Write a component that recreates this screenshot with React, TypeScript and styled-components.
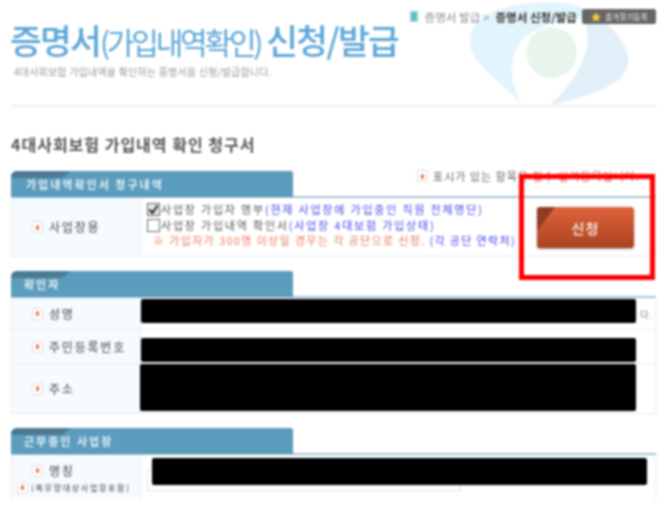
import styled, { createGlobalStyle } from 'styled-components';

const GlobalStyle = createGlobalStyle`
  html, body {
    margin: 0;
    padding: 0;
    background: #fff;
    overflow: hidden;
  }
  * {
    box-sizing: border-box;
  }
`;

const Page = styled.div`
  position: relative;
  width: 668px;
  height: 506px;
  overflow: hidden;
  padding: 0 12px 0 11px;
  background: #fff;
  font-family: "Noto Sans CJK KR", "Liberation Sans", sans-serif;
  color: #555;
  filter: blur(1px);
`;

const Header = styled.header`
  position: relative;
  height: 107px;
  border-bottom: 2px solid #eeeeee;
`;

const Watermark = styled.svg`
  position: absolute;
  left: 449px;
  top: 0;
  width: 200px;
  height: 105px;
`;

const TopBar = styled.div`
  position: relative;
  display: flex;
  justify-content: flex-end;
  align-items: center;
  height: 15px;
  top: 9px;
  font-size: 11.5px;
  letter-spacing: 0.05px;
`;

const CrumbIcon = styled.span`
  width: 8px;
  height: 11px;
  margin-right: 7px;
  border-radius: 1px;
  background: #5cb8bb;
  border: 2px solid #8fd0d2;
`;

const Crumb = styled.span<{ $current?: boolean }>`
  color: ${(p) => (p.$current ? '#333' : '#8a8a8a')};
  font-weight: ${(p) => (p.$current ? 700 : 400)};
  margin-right: ${(p) => (p.$current ? '5px' : '6px')};
  white-space: nowrap;
`;

const BookmarkButton = styled.button`
  display: flex;
  align-items: center;
  justify-content: center;
  gap: 3px;
  width: 74px;
  height: 15px;
  padding: 0;
  border: 0;
  border-radius: 2px;
  background: #666;
  color: #eee;
  font-family: inherit;
  font-size: 7.5px;
  letter-spacing: 0.2px;
`;

const Title = styled.h1`
  position: relative;
  margin: 2px 0 0 -1px;
  font-size: 34.5px;
  line-height: 44px;
  font-weight: 500;
  letter-spacing: -1.75px;
  color: #5ba6d8;
  white-space: nowrap;
`;

const TitleLight = styled.span`
  font-size: 30px;
  font-weight: 400;
  letter-spacing: -3.2px;
`;

const Lead = styled.p`
  position: relative;
  margin: 2px 0 0 3px;
  font-size: 10px;
  line-height: 13px;
  letter-spacing: 0.2px;
  color: #999;
  white-space: nowrap;
`;

const Heading = styled.h2`
  margin: 26px 0 0;
  height: 23px;
  font-size: 16px;
  line-height: 23px;
  font-weight: 700;
  letter-spacing: 1px;
  color: #555;
  white-space: nowrap;
`;

const Section = styled.section<{ $gap: number }>`
  margin-top: ${(p) => p.$gap}px;
`;

const TabRow = styled.div`
  position: relative;
  display: flex;
  justify-content: space-between;
  height: 27px;
  border-bottom: 2px solid #a6c3d9;
`;

const Tab = styled.div<{ $inset: number }>`
  position: relative;
  display: flex;
  align-items: center;
  width: 282px;
  height: 26px;
  padding-left: ${(p) => p.$inset}px;
  border-radius: 6px 2px 0 0;
  overflow: hidden;
  background: #5c9cbd;
  color: #e6f2f7;
  font-size: 11px;
  font-weight: 700;
  letter-spacing: 2px;
  white-space: nowrap;

  &::before {
    content: '';
    position: absolute;
    left: 0;
    top: 0;
    width: 60px;
    height: 7px;
    background: #4d7a92;
    clip-path: polygon(0 0, 100% 0, 85% 100%, 0 100%);
  }

  span {
    position: relative;
  }
`;

const Note = styled.div`
  display: flex;
  align-items: center;
  gap: 5px;
  height: 14px;
  margin: -2px 16px 0 0;
  font-size: 11px;
  letter-spacing: 1px;
  color: #666;
  white-space: nowrap;

  b {
    font-weight: 400;
    color: #e0604a;
  }
`;

const Table = styled.div<{ $open?: boolean }>`
  border: 1px solid #e8ecf0;
  border-top: 0;
  border-bottom-width: ${(p) => (p.$open ? 0 : 1)}px;
`;

const Row = styled.div<{ $height: number }>`
  display: grid;
  grid-template-columns: 129px 1fr;
  height: ${(p) => p.$height}px;
  border-bottom: 1px solid #e8ecf0;

  &:last-child {
    border-bottom: 0;
  }
`;

const Label = styled.div`
  display: flex;
  flex-direction: column;
  justify-content: center;
  background: #f6fbff;
  border-right: 1px solid #e8ecf0;
  color: #666;
  font-weight: 500;
`;

const LabelLine = styled.div<{ $indent?: number; $small?: boolean }>`
  display: flex;
  align-items: center;
  gap: ${(p) => (p.$small ? 3 : 6)}px;
  padding-left: ${(p) => p.$indent ?? 20}px;
  font-size: ${(p) => (p.$small ? 8 : 12)}px;
  line-height: ${(p) => (p.$small ? 14 : 20)}px;
  letter-spacing: ${(p) => (p.$small ? 1.7 : 1.8)}px;
  white-space: nowrap;
`;

const Bullet = styled.span`
  display: inline-flex;
  align-items: center;
  justify-content: center;
  flex: none;
  width: 11px;
  height: 12px;
  border: 1px solid #ddd;
  border-radius: 2px;
  background: #fff;

  &::after {
    content: '';
    width: 3px;
    height: 5px;
    border-radius: 2px;
    background: #e8733c;
  }
`;

const Cell = styled.div`
  position: relative;
  display: flex;
  align-items: flex-start;
  background: #fff;
`;

const OptionList = styled.div`
  display: flex;
  flex-direction: column;
  padding: 4px 0 0 6px;
  font-size: 11px;
  line-height: 15.5px;
  letter-spacing: 1.8px;
  color: #555;
  white-space: nowrap;
`;

const Option = styled.label`
  display: flex;
  align-items: center;
`;

const Box = styled.span<{ $checked?: boolean }>`
  display: inline-flex;
  align-items: center;
  justify-content: center;
  width: 13px;
  height: 13px;
  margin-right: 1px;
  border: 1px solid #666;
  background: ${(p) => (p.$checked ? '#e8e8e8' : '#fff')};
`;

const Blue = styled.span`
  color: #4747ee;
`;

const Warning = styled.div`
  padding-left: 6px;
  color: #ea7a58;
  letter-spacing: 1.36px;
`;

const SubmitButton = styled.button`
  position: absolute;
  left: 396px;
  top: 9px;
  width: 97px;
  height: 41px;
  padding: 0;
  border: 0;
  border-radius: 3px;
  overflow: hidden;
  background: linear-gradient(#df643c, #ab4222);
  box-shadow: 0 1px 2px #999;
  color: #f4dcd0;
  font-family: inherit;
  font-size: 14px;
  font-weight: 700;
  letter-spacing: 1px;

  &::before {
    content: '';
    position: absolute;
    left: 0;
    top: 0;
    width: 18px;
    height: 24px;
    background: #8e3c22;
    clip-path: polygon(0 0, 100% 0, 0 100%);
  }
`;

const Redaction = styled.div<{ $left: number; $top: number; $width: number; $height: number }>`
  position: absolute;
  left: ${(p) => p.$left}px;
  top: ${(p) => p.$top}px;
  width: ${(p) => p.$width}px;
  height: ${(p) => p.$height}px;
  border-radius: 2px;
  background: #000;
`;

const InputBox = styled.div`
  width: 314px;
  height: 22px;
  margin: 14px 0 0 6px;
  border: 1px solid #e4e4e4;
  background: #fff;
`;

const Callout = styled.div`
  position: absolute;
  left: 519px;
  top: 174px;
  width: 136px;
  height: 106px;
  border: 5px solid #f00;
`;

const Tail = styled.span`
  position: absolute;
  left: 499px;
  top: 9px;
  font-size: 9.5px;
  color: #888;
`;

const Checkmark = () => (
  <svg width="11" height="11" viewBox="0 0 11 11">
    <path d="M1.5 5.5 L4.5 9 L9.5 1.5" fill="none" stroke="#222" strokeWidth="2" />
  </svg>
);

const App = () => {
  return (
    <>
      <GlobalStyle />
      <Page>
        <Header>
          <Watermark viewBox="0 0 600 315">
            <path
              d="M185 312 C130 250 25 190 30 120 C35 60 90 30 170 15 C230 5 300 5 345 15 C360 25 372 40 375 55 C300 55 220 80 180 130 C145 180 150 250 185 312 Z"
              fill="#e2f4fc"
            />
            <path
              d="M345 15 C420 50 505 110 505 185 C505 250 390 290 270 315 C320 270 375 200 382 130 C385 90 375 40 345 15 Z"
              fill="#e1eff8"
            />
            <circle cx="275" cy="158" r="76" fill="#e7f5ec" />
          </Watermark>
          <TopBar>
            <CrumbIcon />
            <Crumb>증명서 발급 &gt;</Crumb>
            <Crumb $current>증명서 신청/발급</Crumb>
            <BookmarkButton>
              <svg width="12" height="12" viewBox="0 0 24 24">
                <path d="M12 2l3 7 7 .6-5.4 4.7 1.7 7.2L12 17.6 5.7 21.5l1.7-7.2L2 9.6 9 9z" fill="#f6cf3c" />
              </svg>
              즐겨찾기등록
            </BookmarkButton>
          </TopBar>
          <Title>
            증명서<TitleLight>(가입내역확인)</TitleLight> 신청/발급
          </Title>
          <Lead>4대사회보험 가입내역을 확인하는 증명서를 신청/발급합니다.</Lead>
        </Header>

        <Heading>4대사회보험 가입내역 확인 청구서</Heading>

        <Section $gap={15}>
          <TabRow>
            <Tab $inset={15}>
              <span>가입내역확인서 청구내역</span>
            </Tab>
            <Note>
              <Bullet />
              <span>
                표시가 있는 항목은 <b>필수 입력항목입니다.</b>
              </span>
            </Note>
          </TabRow>
          <Table>
            <Row $height={58}>
              <Label>
                <LabelLine>
                  <Bullet />
                  사업장용
                </LabelLine>
              </Label>
              <Cell>
                <OptionList>
                  <Option>
                    <Box $checked>
                      <Checkmark />
                    </Box>
                    사업장 가입자 명부<Blue>(현재 사업장에 가입중인 직원 전체명단)</Blue>
                  </Option>
                  <Option>
                    <Box />
                    사업장 가입내역 확인서<Blue>(사업장 4대보험 가입상태)</Blue>
                  </Option>
                  <Warning>
                    ※ 가입자가 300명 이상일 경우는 각 공단으로 신청. <Blue>(각 공단 연락처)</Blue>
                  </Warning>
                </OptionList>
                <SubmitButton>신청</SubmitButton>
              </Cell>
            </Row>
          </Table>
        </Section>

        <Section $gap={14}>
          <TabRow>
            <Tab $inset={13}>
              <span>확인자</span>
            </Tab>
          </TabRow>
          <Table>
            <Row $height={32}>
              <Label>
                <LabelLine>
                  <Bullet />
                  성명
                </LabelLine>
              </Label>
              <Cell>
                <Redaction $left={0} $top={1} $width={495} $height={24} />
                <Tail>다.</Tail>
              </Cell>
            </Row>
            <Row $height={34}>
              <Label>
                <LabelLine>
                  <Bullet />
                  주민등록번호
                </LabelLine>
              </Label>
              <Cell>
                <Redaction $left={0} $top={8} $width={495} $height={24} />
              </Cell>
            </Row>
            <Row $height={49}>
              <Label>
                <LabelLine>
                  <Bullet />
                  주소
                </LabelLine>
              </Label>
              <Cell>
                <Redaction $left={-1} $top={0} $width={496} $height={47} />
              </Cell>
            </Row>
          </Table>
        </Section>

        <Section $gap={14}>
          <TabRow>
            <Tab $inset={13}>
              <span>근무중인 사업장</span>
            </Tab>
          </TabRow>
          <Table $open>
            <Row $height={45}>
              <Label>
                <LabelLine>
                  <Bullet />
                  명칭
                </LabelLine>
                <LabelLine $indent={5} $small>
                  <Bullet />
                  (복무망대상사업장포함)
                </LabelLine>
              </Label>
              <Cell>
                <InputBox />
                <Redaction $left={11} $top={3} $width={495} $height={27} />
              </Cell>
            </Row>
          </Table>
        </Section>

        <Callout />
      </Page>
    </>
  );
};

export default App;
